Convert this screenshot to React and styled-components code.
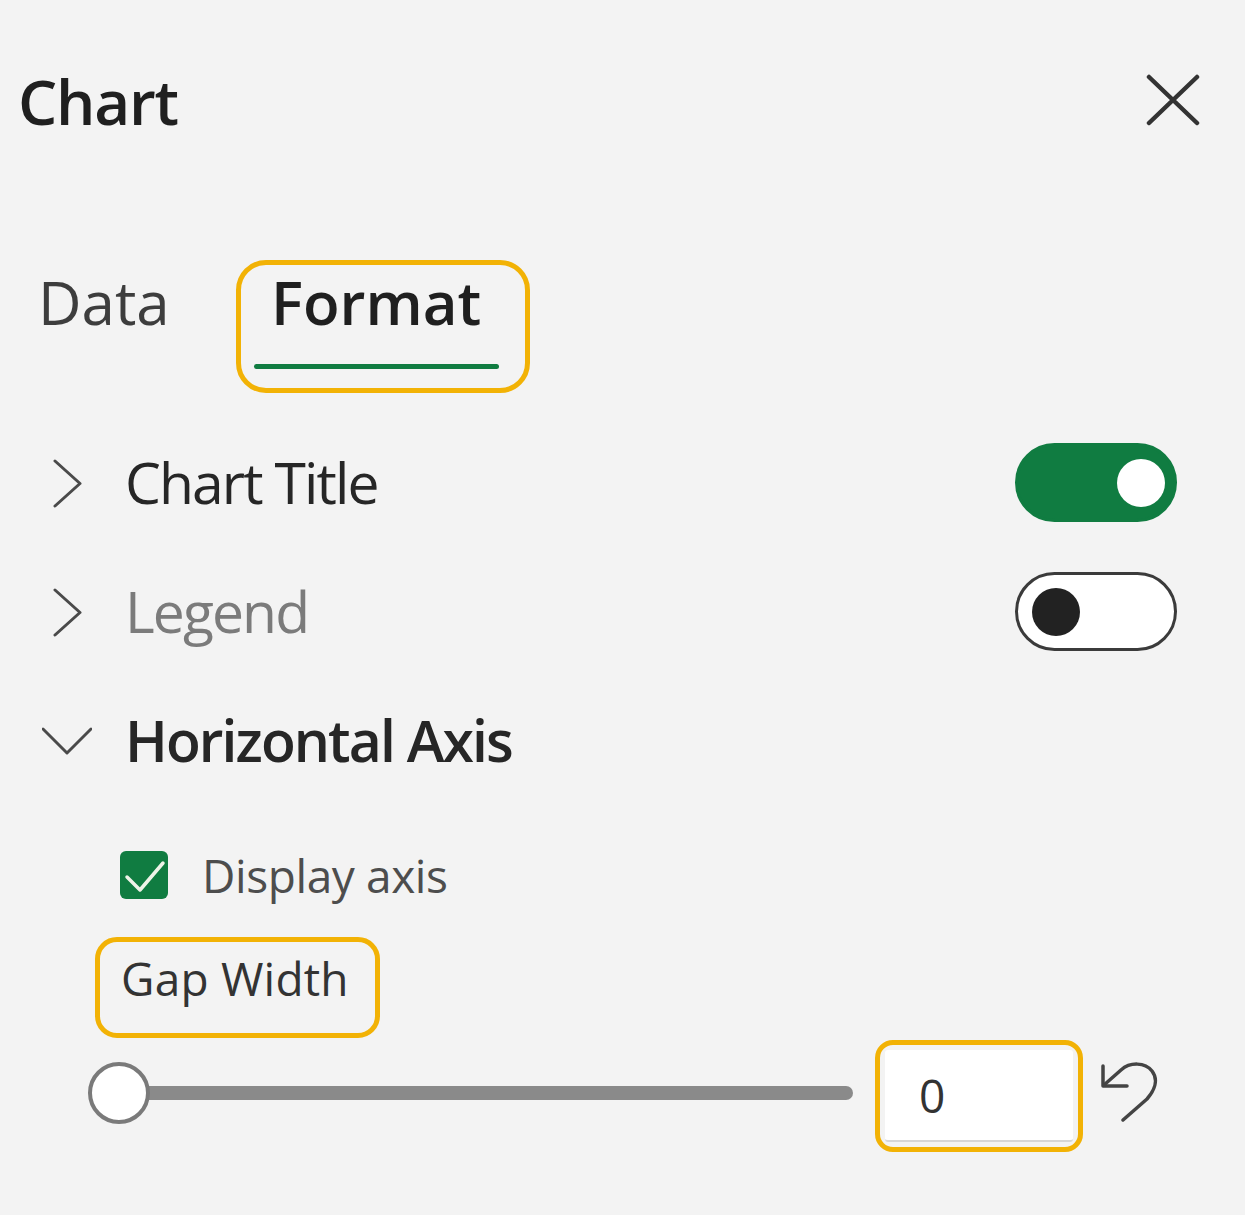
import React from "react";
import styled, { createGlobalStyle } from "styled-components";

const Global = createGlobalStyle`
  html, body { margin: 0; padding: 0; background: #ffffff; }
  * { box-sizing: border-box; }
`;

const ORANGE = "#f2b205";
const GREEN = "#107c41";

const Pane = styled.div`
  width: 1245px;
  height: 1215px;
  background: #f3f3f3;
  font-family: "Open Sans", "Noto Sans", sans-serif;
  color: #242424;
  display: flex;
  flex-direction: column;
  overflow: hidden;
`;

const Header = styled.header`
  height: 202px;
  display: flex;
  align-items: center;
  justify-content: space-between;
  padding: 0 45px 0 18px;
`;

const Title = styled.h1`
  margin: 0;
  font-size: 62px;
  line-height: 1;
  font-weight: 600;
  letter-spacing: -1.2px;
  color: #1f1f1f;
`;

const CloseButton = styled.button`
  width: 54px;
  height: 54px;
  padding: 0;
  border: 0;
  background: transparent;
  display: flex;
  align-items: center;
  justify-content: center;
`;

const TabList = styled.div`
  margin-top: 58px;
  height: 133px;
  display: flex;
  align-items: flex-start;
  padding-left: 38px;
`;

const Highlight = styled.div`
  border: 5px solid ${ORANGE};
  border-radius: ${(p) => p.$radius || 30}px;
  display: flex;
  flex-direction: column;
  width: fit-content;
`;

const TabHighlight = styled(Highlight)`
  width: 294px;
  height: 133px;
  padding: 7px 0 0 13px;
`;

const Tab = styled.div`
  display: flex;
  flex-direction: column;
  align-items: center;
  width: ${(p) => (p.$active ? "245px" : "auto")};
  padding-top: ${(p) => (p.$active ? 0 : 12)}px;
  margin-right: ${(p) => (p.$active ? 0 : 66)}px;
  font-size: 60px;
  line-height: 60px;
  font-weight: ${(p) => (p.$active ? 600 : 400)};
  letter-spacing: 0;
  color: ${(p) => (p.$active ? "#1f1f1f" : "#3d3d3d")};
  &::after {
    content: "";
    display: ${(p) => (p.$active ? "block" : "none")};
    width: 100%;
    height: 5px;
    margin-top: 32px;
    border-radius: 3px;
    background: ${GREEN};
  }
`;

const Sections = styled.div`
  margin-top: 25px;
  display: flex;
  flex-direction: column;
`;

const SectionRow = styled.div`
  height: 129px;
  display: flex;
  align-items: center;
  padding: 0 68px 0 42px;
`;

const ChevronBox = styled.div`
  width: 50px;
  height: 50px;
  margin-right: 33px;
  flex: none;
  display: flex;
`;

const SectionLabel = styled.span`
  flex: 1;
  font-size: 57px;
  line-height: 1;
  font-weight: ${(p) => (p.$expanded ? 600 : 400)};
  letter-spacing: -1.9px;
  color: ${(p) => (p.$muted ? "#7b7b7b" : "#262626")};
`;

const ToggleTrack = styled.div`
  width: 162px;
  height: 79px;
  border-radius: 40px;
  border: 3.5px solid ${(p) => (p.$on ? GREEN : "#3b3b3b")};
  background: ${(p) => (p.$on ? GREEN : "#ffffff")};
  display: flex;
  align-items: center;
  justify-content: ${(p) => (p.$on ? "flex-end" : "flex-start")};
  padding: 0 ${(p) => (p.$on ? 9 : 14)}px;
`;

const ToggleKnob = styled.div`
  width: 48px;
  height: 48px;
  border-radius: 50%;
  background: ${(p) => (p.$on ? "#ffffff" : "#222222")};
`;

const Body = styled.div`
  display: flex;
  flex-direction: column;
`;

const CheckRow = styled.label`
  margin-top: 20px;
  height: 100px;
  display: flex;
  align-items: center;
  padding-left: 120px;
  gap: 34px;
`;

const CheckBox = styled.div`
  width: 48px;
  height: 48px;
  border-radius: 6px;
  background: ${GREEN};
  display: flex;
  flex: none;
`;

const CheckLabel = styled.span`
  font-size: 46px;
  line-height: 1;
  letter-spacing: -0.4px;
  color: #4d4d4d;
`;

const FieldLabelHighlight = styled(Highlight)`
  margin: 12px 0 0 95px;
  height: 101px;
  padding: 13px 26px 0 21px;
`;

const FieldLabel = styled.span`
  font-size: 46px;
  line-height: 1;
  letter-spacing: 0.2px;
  color: #333333;
`;

const SliderRow = styled.div`
  margin-top: 2px;
  height: 112px;
  display: flex;
  align-items: center;
  padding-left: 88px;
`;

const Slider = styled.div`
  position: relative;
  width: 765px;
  height: 62px;
  display: flex;
  align-items: center;
  margin-top: -6px;
`;

const SliderTrack = styled.div`
  flex: 1;
  margin-left: 31px;
  height: 14px;
  border-radius: 7px;
  background: #8a8a8a;
`;

const SliderThumb = styled.div`
  position: absolute;
  left: 0;
  top: 0;
  width: 62px;
  height: 62px;
  border-radius: 50%;
  border: 4px solid #7a7a7a;
  background: #ffffff;
`;

const InputHighlight = styled(Highlight)`
  margin-left: 22px;
  width: 208px;
  height: 112px;
  padding: 5px;
`;

const NumberBox = styled.div`
  flex: 1;
  background: #ffffff;
  border-bottom: 2px solid #d6d6d6;
  border-radius: 3px;
  display: flex;
  align-items: center;
  padding-left: 34px;
  font-size: 46px;
  line-height: 1;
  color: #333333;
`;

const ResetButton = styled.button`
  margin-left: 16px;
  width: 60px;
  height: 60px;
  padding: 0;
  border: 0;
  background: transparent;
  display: flex;
  margin-top: -8px;
`;

const ChevronRight = () => (
  <svg width="50" height="50" viewBox="0 0 50 50" fill="none">
    <path d="M13 3 L38 25.5 L13 48" stroke="#4a4a4a" strokeWidth="3" strokeLinecap="round" strokeLinejoin="round" />
  </svg>
);

const ChevronDown = () => (
  <svg width="50" height="50" viewBox="0 0 50 50" fill="none">
    <path d="M1 13 L25 37 L49 13" stroke="#4a4a4a" strokeWidth="3" strokeLinecap="round" strokeLinejoin="round" />
  </svg>
);

const Toggle = ({ on }) => (
  <ToggleTrack $on={on}>
    <ToggleKnob $on={on} />
  </ToggleTrack>
);

export default function App() {
  return (
    <>
      <Global />
      <Pane>
        <Header>
          <Title>Chart</Title>
          <CloseButton aria-label="Close">
            <svg width="54" height="54" viewBox="0 0 54 54" fill="none">
              <path d="M3 3 L51 49 M51 3 L3 49" stroke="#333333" strokeWidth="4.5" strokeLinecap="round" />
            </svg>
          </CloseButton>
        </Header>

        <TabList>
          <Tab>Data</Tab>
          <TabHighlight>
            <Tab $active>Format</Tab>
          </TabHighlight>
        </TabList>

        <Sections>
          <SectionRow>
            <ChevronBox><ChevronRight /></ChevronBox>
            <SectionLabel>Chart Title</SectionLabel>
            <Toggle on />
          </SectionRow>
          <SectionRow>
            <ChevronBox><ChevronRight /></ChevronBox>
            <SectionLabel $muted>Legend</SectionLabel>
            <Toggle on={false} />
          </SectionRow>
          <SectionRow>
            <ChevronBox><ChevronDown /></ChevronBox>
            <SectionLabel $expanded>Horizontal Axis</SectionLabel>
          </SectionRow>
        </Sections>

        <Body>
          <CheckRow>
            <CheckBox>
              <svg width="48" height="48" viewBox="0 0 48 48" fill="none">
                <path d="M7 26 L20 39 L43 12" stroke="#eef3e8" strokeWidth="3.5" strokeLinecap="round" strokeLinejoin="round" />
              </svg>
            </CheckBox>
            <CheckLabel>Display axis</CheckLabel>
          </CheckRow>

          <FieldLabelHighlight $radius={22}>
            <FieldLabel>Gap Width</FieldLabel>
          </FieldLabelHighlight>

          <SliderRow>
            <Slider>
              <SliderTrack />
              <SliderThumb />
            </Slider>
            <InputHighlight $radius={18}>
              <NumberBox>0</NumberBox>
            </InputHighlight>
            <ResetButton aria-label="Reset">
              <svg width="60" height="60" viewBox="0 0 60 60" fill="none">
                <path d="M4 4 V24 H28" stroke="#444444" strokeWidth="3.5" strokeLinecap="round" strokeLinejoin="round" />
                <path d="M5 23 L22 8 C31 0 46 0 53 9 C60 18 55 29 48 37 L24 58" stroke="#444444" strokeWidth="3.5" strokeLinecap="round" strokeLinejoin="round" />
              </svg>
            </ResetButton>
          </SliderRow>
        </Body>
      </Pane>
    </>
  );
}
